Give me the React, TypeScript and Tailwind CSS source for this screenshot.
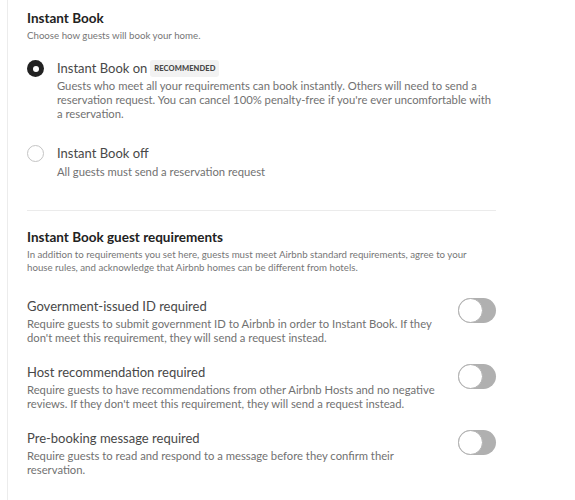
import { useState } from 'react';

const requirements = [
  {
    id: 'gov-id',
    title: 'Government-issued ID required',
    body: "Require guests to submit government ID to Airbnb in order to Instant Book. If they don't meet this requirement, they will send a request instead.",
  },
  {
    id: 'host-rec',
    title: 'Host recommendation required',
    body: "Require guests to have recommendations from other Airbnb Hosts and no negative reviews. If they don't meet this requirement, they will send a request instead.",
  },
  {
    id: 'pre-msg',
    title: 'Pre-booking message required',
    body: 'Require guests to read and respond to a message before they confirm their reservation.',
  },
];

const Toggle = ({ on, onChange }: { on: boolean; onChange: () => void }) => (
  <button
    onClick={onChange}
    className={`relative mt-[1px] shrink-0 w-[38px] h-[25px] rounded-full ${on ? 'bg-[#008489]' : 'bg-[#b0b0b0]'}`}
    aria-pressed={on}
  >
    <span
      className={`absolute top-0 w-[25px] h-[25px] rounded-full bg-white border border-[#b0b0b0] ${on ? 'left-[13px]' : 'left-0'}`}
    />
  </button>
);

export default function App() {
  const [instant, setInstant] = useState(true);
  const [toggles, setToggles] = useState<Record<string, boolean>>({});

  return (
    <div className="min-h-[500px] bg-white font-['Lato',sans-serif] text-[#484848]">
      <div className="ml-[7px] min-h-[500px] border-l border-[#ececec] pl-[19px] pt-[9px]">
        <h2 className="text-[13.5px] font-bold leading-[18px] text-[#222]">Instant Book</h2>
        <p className="mt-[2px] text-[9.7px] leading-[12px] text-[#767676]">
          Choose how guests will book your home.
        </p>

        <div className="mt-[18px] flex gap-[13px]">
          <button
            onClick={() => setInstant(true)}
            className={`mt-[1px] shrink-0 w-[17px] h-[17px] rounded-full flex items-center justify-center ${instant ? 'bg-[#222]' : 'border border-[#c4c4c4]'}`}
          >
            {instant && <span className="w-[6px] h-[6px] rounded-full bg-white" />}
          </button>
          <div className="w-[440px]">
            <div className="flex items-center gap-[3px]">
              <span className="text-[13px] leading-[18px]">Instant Book on</span>
              <span className="rounded-[3px] bg-[#f2f2f2] px-[4px] py-[3px] text-[7.5px] font-black leading-[11px] tracking-[0.1px] text-[#484848]">
                RECOMMENDED
              </span>
            </div>
            <p className="mt-[2px] text-[11.25px] leading-[14px] text-[#717171]">
              Guests who meet all your requirements can book instantly. Others will need to send a reservation request. You can cancel 100% penalty-free if you're ever uncomfortable with a reservation.
            </p>
          </div>
        </div>

        <div className="mt-[23px] flex gap-[13px]">
          <button
            onClick={() => setInstant(false)}
            className={`mt-[1px] shrink-0 w-[17px] h-[17px] rounded-full flex items-center justify-center ${!instant ? 'bg-[#222]' : 'border border-[#c4c4c4]'}`}
          >
            {!instant && <span className="w-[6px] h-[6px] rounded-full bg-white" />}
          </button>
          <div>
            <div className="text-[13px] leading-[18px]">Instant Book off</div>
            <p className="mt-[3px] text-[11.25px] leading-[14px] text-[#717171]">
              All guests must send a reservation request
            </p>
          </div>
        </div>

        <hr className="mt-[31px] w-[469px] border-t border-[#ebebeb]" />

        <h2 className="mt-[17px] text-[13.5px] font-bold leading-[18px] text-[#222]">
          Instant Book guest requirements
        </h2>
        <p className="mt-[1.5px] w-[455px] text-[9.7px] leading-[13px] text-[#767676]">
          In addition to requirements you set here, guests must meet Airbnb standard requirements, agree to your house rules, and acknowledge that Airbnb homes can be different from hotels.
        </p>

        <div className="mt-[23px] w-[469px] flex flex-col gap-[18px]">
          {requirements.map((r) => (
            <div key={r.id} className="flex items-start justify-between">
              <div className="w-[420px]">
                <div className="text-[13px] leading-[18px]">{r.title}</div>
                <p className="mt-[2px] text-[11.25px] leading-[14px] text-[#717171]">{r.body}</p>
              </div>
              <Toggle
                on={!!toggles[r.id]}
                onChange={() => setToggles({ ...toggles, [r.id]: !toggles[r.id] })}
              />
            </div>
          ))}
        </div>
      </div>
    </div>
  );
}
